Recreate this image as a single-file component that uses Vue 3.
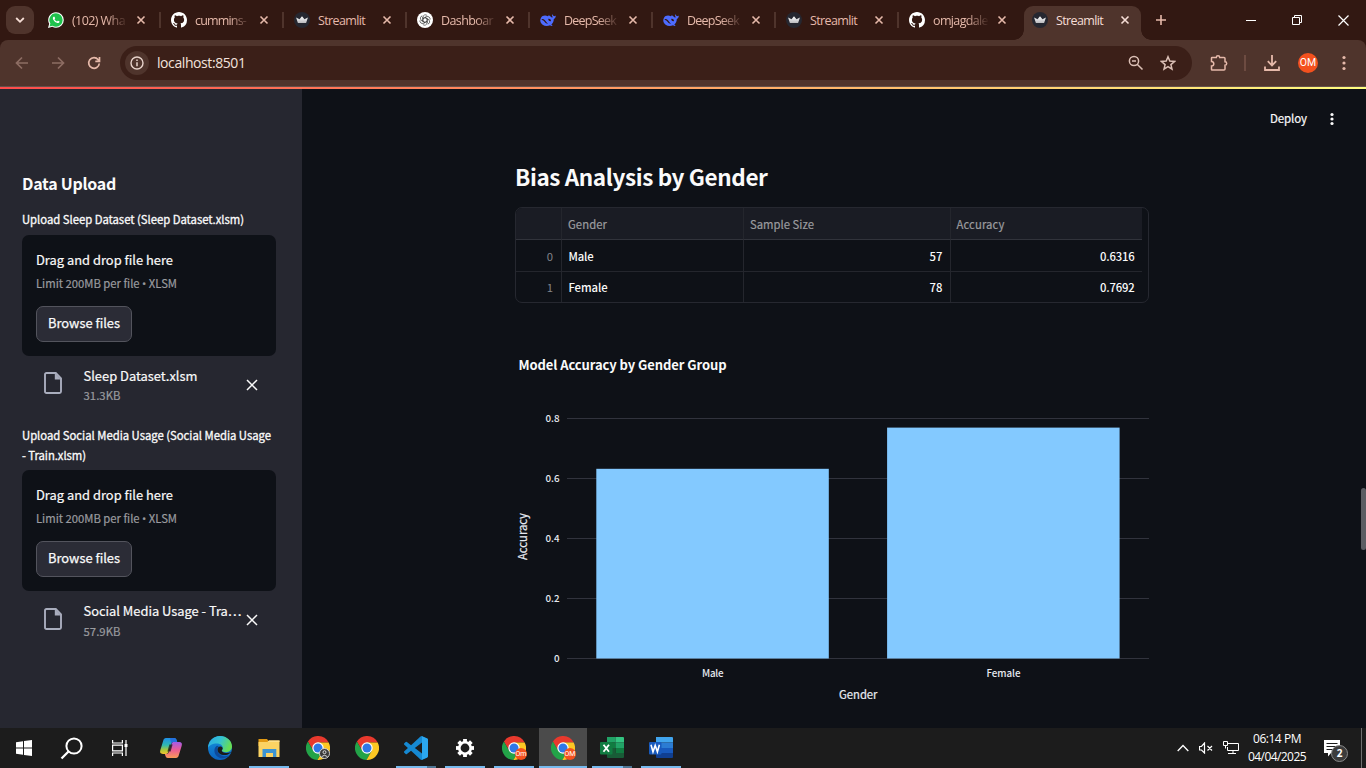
<script setup>
const tabs = [
  { icon: 'whatsapp', title: '(102) Wha', w: 53 },
  { icon: 'github', title: 'cummins-', w: 51 },
  { icon: 'crown', title: 'Streamlit', w: 47 },
  { icon: 'openai', title: 'Dashboar', w: 52 },
  { icon: 'whale', title: 'DeepSeek', w: 52 },
  { icon: 'whale', title: 'DeepSeek', w: 52 },
  { icon: 'crown', title: 'Streamlit', w: 47 },
  { icon: 'github', title: 'omjagdale', w: 55 },
  { icon: 'crown', title: 'Streamlit', w: 47, active: true },
]

const uploads = [
  {
    label: [{ text: 'Upload Sleep Dataset (Sleep Dataset.xlsm)', w: 222 }],
    file: 'Sleep Dataset.xlsm', fw: 114, size: '31.3KB',
  },
  {
    label: [
      { text: 'Upload Social Media Usage (Social Media Usage', w: 249 },
      { text: '- Train.xlsm)', w: 64 },
    ],
    file: 'Social Media Usage - Tra…', fw: 158, size: '57.9KB',
  },
]

const rows = [
  { i: 0, gender: 'Male', gw: 25, size: '57', acc: '0.6316' },
  { i: 1, gender: 'Female', gw: 39, size: '78', acc: '0.7692' },
]

const ticks = [
  { v: '0.8', y: 418.5 },
  { v: '0.6', y: 478.5 },
  { v: '0.4', y: 538.5 },
  { v: '0.2', y: 598.5 },
  { v: '0', y: 658.5 },
]

const apps = [
  { icon: 'copilot' },
  { icon: 'edge' },
  { icon: 'folder', open: true },
  { icon: 'chrome', badge: 'user' },
  { icon: 'chrome' },
  { icon: 'vscode', open: true, multi: true },
  { icon: 'gear', open: true },
  { icon: 'chrome', badge: 'Om', open: true },
  { icon: 'chrome', badge: 'OM', open: true, active: true },
  { icon: 'excel', open: true, multi: true },
  { icon: 'word', open: true },
]

// Tracks a label so that it takes exactly the given number of pixels.
const vFit = {
  mounted(el, { value }) {
    if (!value) return
    el.style.letterSpacing = '0px'
    const range = document.createRange()
    range.selectNodeContents(el)
    const natural = range.getBoundingClientRect().width
    el.style.letterSpacing = (value - natural) / el.textContent.length + 'px'
  },
}
</script>

<template>
  <div class="screen">
    <svg class="defs" width="0" height="0">
      <defs>
        <linearGradient id="cpA" x1="0" y1="0" x2="0" y2="1">
          <stop offset="0" stop-color="#1f8fe8" /><stop offset=".45" stop-color="#2fb9b0" />
          <stop offset=".75" stop-color="#a9c83a" /><stop offset="1" stop-color="#f3c32e" />
        </linearGradient>
        <linearGradient id="cpB" x1="0" y1="0" x2="0" y2="1">
          <stop offset="0" stop-color="#a55be8" /><stop offset=".5" stop-color="#ee5d92" />
          <stop offset="1" stop-color="#fb9a56" />
        </linearGradient>
        <linearGradient id="edA" x1="0" y1="0" x2="1" y2=".35">
          <stop offset="0" stop-color="#2aa8e8" /><stop offset=".55" stop-color="#35c3d0" />
          <stop offset="1" stop-color="#66dd55" />
        </linearGradient>
        <linearGradient id="edB" x1="0" y1="0" x2="0" y2="1">
          <stop offset="0" stop-color="#1593dc" /><stop offset="1" stop-color="#0b62c0" />
        </linearGradient>
        <linearGradient id="crownFill" x1="0" y1="0" x2="0" y2="1">
          <stop offset="0" stop-color="#ffffff" /><stop offset="1" stop-color="#b9b9bd" />
        </linearGradient>
        <symbol id="whatsapp" viewBox="0 0 24 24">
          <path fill="#fff" d="M12 .3A11.7 11.7 0 0 1 12 23.700c-2 0-4-.5-5.600-1.400L0 24l1.800-6.200A11.700 11.700 0 0 1 12 .3" />
          <path fill="#1fc24c" d="M12 2a10 10 0 0 1 0 20c-1.970 0-3.800-.57-5.350-1.550L2.300 21.700l1.250-4.350A10 10 0 0 1 12 2" />
          <path fill="#fff" d="M16.750 13.960c.25.13.41.2.46.3.06.11.04.61-.21 1.180-.2.56-1.240 1.100-1.700 1.120-.46.02-.47.36-2.960-.73-2.490-1.090-3.990-3.750-4.110-3.920-.12-.17-.96-1.380-.92-2.610.05-1.220.69-1.800.95-2.040.24-.26.51-.29.68-.26h.47c.15 0 .36-.06.55.45l.69 1.870c.06.13.1.28.01.44l-.27.41-.39.42c-.12.12-.26.25-.12.5.12.26.62 1.090 1.320 1.780.91.88 1.710 1.170 1.950 1.300.24.14.39.12.54-.04l.81-.94c.19-.25.35-.19.58-.11z" />
        </symbol>
        <symbol id="github" viewBox="0 0 16 16">
          <path fill="#fff" d="M8 0C3.580 0 0 3.580 0 8c0 3.540 2.290 6.530 5.470 7.590.4.07.55-.17.55-.38 0-.19-.01-.82-.01-1.490-2.010.37-2.530-.49-2.690-.94-.09-.23-.48-.94-.82-1.130-.28-.15-.68-.52-.01-.53.63-.01 1.080.58 1.230.82.72 1.210 1.870.87 2.330.66.07-.52.28-.87.51-1.070-1.780-.2-3.640-.89-3.640-3.950 0-.87.31-1.590.82-2.150-.08-.2-.36-1.020.08-2.120 0 0 .67-.21 2.200.82.64-.18 1.320-.27 2-.27.68 0 1.360.09 2 .27 1.530-1.040 2.200-.82 2.200-.82.44 1.100.16 1.920.08 2.120.51.56.82 1.270.82 2.150 0 3.070-1.870 3.750-3.650 3.950.29.25.54.73.54 1.480 0 1.070-.01 1.930-.01 2.200 0 .21.15.46.55.38A8.013 8.013 0 0 0 16 8c0-4.420-3.580-8-8-8z" />
        </symbol>
        <symbol id="crown" viewBox="0 0 16 16">
          <circle cx="8" cy="8" r="8" fill="#262730" />
          <path fill="url(#crownFill)" d="M2.100 5.500 5.500 7.200 8 4.300l2.500 2.900 3.400-1.700-1.700 5.200c-.1.300-.3.400-.6.400H4.400c-.3 0-.5-.1-.6-.4z" />
        </symbol>
        <symbol id="openai" viewBox="0 0 16 16">
          <circle cx="8" cy="8" r="8" fill="#fff" />
          <g fill="none" stroke="#333" stroke-width=".65" stroke-linejoin="round">
            <path v-for="a in 6" :key="a" :transform="`rotate(${a * 60} 8 8)`" d="M6 9.100V5.100a2.400 2.400 0 0 1 4.200-1.500M6.100 6.500 9.400 4.600" />
          </g>
        </symbol>
        <symbol id="whale" viewBox="0 0 16 16">
          <path fill="#4d6bfe" d="M15.700 3.600c-.5.500-1 .6-1.600.5-.6-.1-1-.5-1.500-1.100-.2-.3-.3-.7-.4-1-.4.600-.3 1.300 0 1.900.3.700.5 1.300.1 1.900-.9-.3-1.600-1-2.300-1.700-.5-.6-1.100-1-1.700-.9.500.700.1 1-.4 1C4.900 3 2.200 3.600.9 5.900c-1.400 2.500-.4 5.300 1.700 6.900 2.100 1.500 5 1.600 7.500.5.500.5 1.400.7 2.200.5.300-.1.200-.4 0-.5-.4-.3-.8-.6-.9-.9 1.700-1.500 2.400-3.400 2.400-5.500 1.400-.3 2.100-1.800 1.900-3.300M8 12.100c-1.900-.4-3-1.600-4.100-3C3.200 8.300 2.400 7.900 1.500 8c.1-.800 1-1.100 2-.7 1.900.7 2.600 2.800 4.500 4.800m1.500-3.200C8.700 8.500 8.100 7.700 8.300 6.800c.9-.3 1.900.1 2.400 1 .4.700.3 1.400-.2 1.500z" />
        </symbol>
        <symbol id="close" viewBox="0 0 10 10">
          <path d="M1.500 1.500l7 7M8.500 1.500l-7 7" fill="none" stroke="currentColor" stroke-width="1.600" />
        </symbol>
        <symbol id="chrome" viewBox="0 0 24 24">
          <path fill="#e8392d" d="M12 12V6.500h10.670A12 12 0 0 0 1.900 5.510L7.240 14.750z" />
          <path fill="#23a348" d="M12 12 7.240 14.750 1.900 5.510A12 12 0 0 0 11.430 23.990l5.330-9.240z" />
          <path fill="#fcc723" d="M12 12l4.760 2.750-5.330 9.240A12 12 0 0 0 22.670 6.500H12z" />
          <circle cx="12" cy="12" r="5.700" fill="#fff" /><circle cx="12" cy="12" r="4.500" fill="#2f77e8" />
        </symbol>
        <symbol id="copilot" viewBox="0 0 24 24">
          <path fill="url(#cpA)" d="M7 2h8.200c1.200 0 1.900.7 2.300 1.900l.7 2.100h-3.600c-1.300 0-2 .8-2.400 2L9.400 16c-.5 1.300-1.200 1.900-2.300 1.900H3.800c-2.300 0-3.200-1.300-2.500-3.600L4.200 4.700C4.700 3 5.500 2 7 2z" />
          <path fill="#2370dd" d="M11 2h4.200c1.200 0 1.900.7 2.300 1.900l.7 2.100h-3.600c-1.300 0-2 .8-2.400 2z" />
          <path fill="url(#cpB)" d="M17 22H8.800c-1.200 0-1.900-.7-2.300-1.900L5.800 18h1.700c1.300 0 2-.8 2.400-2l2.700-8c.5-1.300 1.200-1.900 2.300-1.900h5.300c2.300 0 3.200 1.300 2.500 3.600l-2.900 9.600C19.300 21 18.500 22 17 22z" />
          <path fill="#1e1e1e" d="M10.400 8.500h3.200l-2 7H8.400z" opacity=".8" />
        </symbol>
        <symbol id="edge" viewBox="0 0 24 24">
          <circle cx="12" cy="12" r="12" fill="url(#edB)" />
          <path fill="url(#edA)" d="M0 12C.3 5.200 5.300 0 12 0c7 0 12 5 12 10.600 0 3.400-2.600 5.600-5.900 5.600-2.300 0-4.300-.6-4.300-1.700 0-.7.9-1 .9-2.600 0-2.200-2-4.400-6-4.400C4.500 7.500 1 9.600 0 12z" />
          <path fill="#0d4a9c" d="M8.800 9.700c-3 2.100-3.400 7 .2 10.500 2.600 2.500 8 3.300 12.200-.6C15 22 9.200 18 9.200 13.400c0-1.500.6-2.700 1.700-3.500z" />
          <path fill="#1b1b1b" d="M9.500 13.400c0 3.900 4.500 6.800 9.800 5.300 2-.7 3.300-1.800 3.700-2.600-1.400.7-3 1-4.900.9-2.400-.1-4.300-.9-4.300-2.500 0-.7.9-1 .9-2.600-1.700-2.600-5.200-1.500-5.200 1.500z" />
        </symbol>
        <symbol id="folder" viewBox="0 0 24 24">
          <path fill="#e29a13" d="M1.500 3H10l2 2.500V10H1.500z" /><path fill="#fbd363" d="M1.500 6h9l1.500-1.500h10.500V21h-21z" />
          <path fill="#ffe08a" d="M1.500 6h9l1.500-1.500h10.500V6z" />
          <path fill="#3b94d3" d="M5.500 13h13.800v8H16v-4H9v4H5.500z" />
        </symbol>
        <symbol id="vscode" viewBox="0 0 24 24">
          <path fill="#1689d2" d="M23.150 2.587L18.210.21a1.494 1.494 0 0 0-1.705.29l-9.460 8.630-4.120-3.128a.999.999 0 0 0-1.276.057L.327 7.261A1 1 0 0 0 .326 8.740L3.899 12 .326 15.260a1 1 0 0 0 .001 1.479L1.650 17.940a.999.999 0 0 0 1.276.057l4.120-3.128 9.460 8.630a1.492 1.492 0 0 0 1.704.290l4.942-2.377A1.500 1.500 0 0 0 24 20.060V3.939a1.500 1.500 0 0 0-.85-1.352zm-5.146 14.861L10.826 12l7.178-5.448v10.896z" />
          <path fill="#2ba7ef" d="M18 .2l5.150 2.387a1.500 1.500 0 0 1 .85 1.352V20.060a1.500 1.500 0 0 1-.85 1.352L18 23.800z" />
        </symbol>
        <symbol id="gear" viewBox="0 0 24 24">
          <g fill="#fff"><rect v-for="a in 8" :key="a" x="10.100" y="3" width="3.800" height="5" :transform="`rotate(${a * 45} 12 12)`" /></g>
          <circle cx="12" cy="12" r="5.700" fill="#1c1c1c" stroke="#fff" stroke-width="2.600" />
        </symbol>
        <symbol id="excel" viewBox="0 0 24 24">
          <path fill="#21a366" d="M7 1h8.500v5.500H7z" /><path fill="#33c481" d="M15.500 1H23a1 1 0 0 1 1 1v4.500h-8.500z" />
          <path fill="#107c41" d="M7 6.500h8.500V12H7zM15.500 12H24v5h-8.500z" /><path fill="#21a366" d="M15.500 6.500H24V12h-8.500z" />
          <path fill="#185c37" d="M7 12h8.500v5H24v4a1 1 0 0 1-1 1H8a1 1 0 0 1-1-1z" />
          <rect y="6" width="12.500" height="12.500" rx="1" fill="#107c41" />
          <path d="M3.500 8.800l5.500 7M9 8.800l-5.500 7" stroke="#fff" stroke-width="1.800" />
        </symbol>
        <symbol id="word" viewBox="0 0 24 24">
          <path fill="#41a5ee" d="M7 1h16a1 1 0 0 1 1 1v4.500H7z" /><path fill="#2b7cd3" d="M7 6.500h17V12H7z" />
          <path fill="#185abd" d="M7 12h17v5H7z" /><path fill="#103f91" d="M7 17h17v4a1 1 0 0 1-1 1H8a1 1 0 0 1-1-1z" />
          <rect y="6" width="12.500" height="12.500" rx="1" fill="#185abd" />
          <path d="M2 8.800l2 7 2.200-6.400 2.200 6.400 2-7" fill="none" stroke="#fff" stroke-width="1.600" />
        </symbol>
      </defs>
    </svg>

    <header class="tabstrip">
      <div class="tabsearch">
        <svg width="12" height="12" viewBox="0 0 12 12"><path d="M2.200 4 6 7.800 9.800 4" fill="none" stroke="#f6ded6" stroke-width="1.800" /></svg>
      </div>
      <div v-for="(t, i) in tabs" :key="i" class="tab" :class="{ active: t.active, bare: i === 7, whole: t.icon === 'crown' }">
        <svg class="fav" width="16" height="16"><use :href="'#' + t.icon" /></svg>
        <span class="title"><span v-fit="t.w">{{ t.title }}</span></span>
        <svg class="x" width="10" height="10"><use href="#close" /></svg>
      </div>
      <svg class="plus" width="12" height="12" viewBox="0 0 12 12"><path d="M6 1v10M1 6h10" stroke="#e6b9aa" stroke-width="1.600" /></svg>
      <div class="winbtns">
        <svg width="11" height="11" viewBox="0 0 11 11"><path d="M0 5.500h10" stroke="#fff" /></svg>
        <svg width="11" height="11" viewBox="0 0 11 11"><path d="M.5 2.500h7v7h-7zM2.500 2.500v-2h7v7h-2" fill="none" stroke="#fff" /></svg>
        <svg width="11" height="11" viewBox="0 0 11 11"><path d="M.5.5l10 10M10.500.5l-10 10" fill="none" stroke="#fff" stroke-width="1.200" /></svg>
      </div>
    </header>

    <div class="frame">
      <div class="toolbar">
        <div class="nav">
          <svg width="14" height="14" viewBox="0 0 14 14" class="dim"><path d="M13 7H1.500M7 1.500 1.500 7 7 12.500" /></svg>
          <svg width="14" height="14" viewBox="0 0 14 14" class="dim"><path d="M1 7h11.500M7 1.500 12.500 7 7 12.500" /></svg>
          <svg width="14" height="14" viewBox="0 0 14 14"><path d="M12.300 7.500A5.300 5.300 0 1 1 11.200 3.700L12.500 5M12.500 1v4.300H8.300" /></svg>
        </div>
        <div class="omnibox">
          <div class="info">
            <svg width="14" height="14" viewBox="0 0 14 14"><circle cx="7" cy="7" r="6" fill="none" stroke="#e8d3cb" stroke-width="1.400" /><path d="M7 6.200v4M7 3.500v1.500" stroke="#e8d3cb" stroke-width="1.500" /></svg>
          </div>
          <span class="url"><span v-fit="88.5">localhost:8501</span></span>
          <svg class="zoom" width="16" height="16" viewBox="0 0 16 16"><path d="M9.200 9.200 14.500 14.500M4 6h4" /><circle cx="6" cy="6" r="4.600" /></svg>
          <svg class="star" width="16" height="16" viewBox="0 0 16 16"><path d="M8 1.800l1.800 4.300 4.700.4-3.600 3.100 1.100 4.600L8 11.700l-4 2.500 1.100-4.600L1.500 6.500l4.700-.4z" /></svg>
        </div>
        <svg class="puzzle" width="18" height="18" viewBox="0 0 18 18"><path d="M2 3.500h4.300a1.700 1.700 0 0 1 3.400 0h4.300q1 0 1 1v3.300a1.700 1.700 0 0 1 0 3.400v3.800q0 1-1 1H2q-.5 0-.5-.5V12a2.300 2.300 0 0 0 0-4.600V4q0-.5.500-.5z" fill="none" stroke="#e6b9aa" stroke-width="1.500" /></svg>
        <i class="sep"></i>
        <svg class="dl" width="18" height="18" viewBox="0 0 18 18"><path d="M9 1v10M4.800 7.200 9 11.400l4.200-4.200M2 12.500V16h14v-3.500" fill="none" stroke="#e6b9aa" stroke-width="1.800" /></svg>
        <div class="avatar">OM</div>
        <svg class="kebab" width="4" height="16" viewBox="0 0 4 16" fill="#e6b9aa"><circle cx="2" cy="2.500" r="1.600" /><circle cx="2" cy="8" r="1.600" /><circle cx="2" cy="13.500" r="1.600" /></svg>
      </div>
    </div>
    <div class="rainbow"></div>

    <div class="page">
      <aside class="sidebar">
        <h2><span v-fit="94">Data Upload</span></h2>
        <section v-for="u in uploads" :key="u.file">
          <div class="label"><div v-for="l in u.label" :key="l.text"><span v-fit="l.w">{{ l.text }}</span></div></div>
          <div class="drop">
            <div class="drag"><span v-fit="137">Drag and drop file here</span></div>
            <div class="limit"><span v-fit="141">Limit 200MB per file <span class="dot">•</span> XLSM</span></div>
            <button><span v-fit="72">Browse files</span></button>
          </div>
          <div class="file">
            <svg width="18" height="22" viewBox="0 0 18 22"><path d="M2.500 1h9.300L17 6.300v13.200q0 1.500-1.500 1.500h-13Q1 21 1 19.500v-17Q1 1 2.500 1z" fill="none" stroke="#a9adbd" stroke-width="1.900" /><path d="M10.800 1v6.500H17z" fill="#a9adbd" /></svg>
            <div class="meta">
              <div class="fname"><span v-fit="u.fw">{{ u.file }}</span></div>
              <div class="fsize"><span v-fit="37">{{ u.size }}</span></div>
            </div>
            <svg class="rm" width="12" height="12" viewBox="0 0 12 12"><path d="M1 1l10 10M11 1 1 11" stroke="#fafafa" stroke-width="1.500" /></svg>
          </div>
        </section>
      </aside>

      <main>
        <div class="apphead">
          <span class="deploy"><span v-fit="37">Deploy</span></span>
          <svg width="4" height="14" viewBox="0 0 4 14" fill="#fafafa"><circle cx="2" cy="2.500" r="1.600" /><circle cx="2" cy="7" r="1.600" /><circle cx="2" cy="11.500" r="1.600" /></svg>
        </div>
        <div class="content">
          <h3><span v-fit="252.500">Bias Analysis by Gender</span></h3>
          <div class="table">
            <div class="cell hd"></div>
            <div class="cell hd"><span v-fit="39">Gender</span></div>
            <div class="cell hd"><span v-fit="64">Sample Size</span></div>
            <div class="cell hd last"><span v-fit="48">Accuracy</span></div>
            <template v-for="r in rows" :key="r.i">
              <div class="cell idx">{{ r.i }}</div>
              <div class="cell name"><span v-fit="r.gw">{{ r.gender }}</span></div>
              <div class="cell num"><span v-fit="13">{{ r.size }}</span></div>
              <div class="cell num last"><span v-fit="34.5">{{ r.acc }}</span></div>
            </template>
          </div>
          <svg class="chart" width="634" height="425" viewBox="515 303 634 425">
            <text class="ctitle" x="518.500" y="370" textLength="208">Model Accuracy by Gender Group</text>
            <g v-for="t in ticks" :key="t.v">
              <path :d="`M567 ${t.y}H1149`" stroke="#31333d" />
              <text class="tick" x="559.500" :y="t.y + 3.5" text-anchor="end">{{ t.v }}</text>
            </g>
            <rect x="596.300" y="468.800" width="232.500" height="189.700" fill="#83c9ff" />
            <rect x="887.100" y="427.600" width="232.500" height="230.900" fill="#83c9ff" />
            <text class="tick" x="702" y="677" textLength="21.500">Male</text>
            <text class="tick" x="986.500" y="677" textLength="34">Female</text>
            <text class="axis" x="839" y="699" textLength="38.500">Gender</text>
            <text class="axis" transform="translate(527 560) rotate(-90)" textLength="47">Accuracy</text>
          </svg>
        </div>
      </main>
      <i class="thumb"></i>
    </div>

    <footer class="taskbar">
      <div class="sys"><svg width="16" height="16" viewBox="0 0 16 16" fill="#fff"><path d="M0 2.300 7 1.200v6.300H0zM8 1l8-1v7.500H8zM0 8.500h7v6.300l-7-1.100zM8 8.500h8V16l-8-1z" /></svg></div>
      <div class="sys"><svg width="24" height="24" viewBox="0 0 24 24" fill="none" stroke="#fff"><circle cx="14" cy="10" r="7.600" stroke-width="2" /><path d="M8.500 15.500 1.500 22.500" stroke-width="2.300" /></svg></div>
      <div class="sys"><svg width="16" height="16" viewBox="0 0 16 16" fill="none" stroke="#fff" stroke-width="1.200"><path d="M.6 0v3h9.800V0M.6 5.200h9.800v5.600H.6zM.6 16v-3h9.800v3M14 0v16" /><path d="M14 4v3" stroke-width="3" /></svg></div>
      <div class="apps">
        <div v-for="(a, i) in apps" :key="i" class="app" :class="{ open: a.open, active: a.active, multi: a.multi }">
          <svg width="24" height="24"><use :href="'#' + a.icon" /></svg>
          <span v-if="a.badge === 'user'" class="ubadge">
            <svg width="11" height="11" viewBox="0 0 11 11"><circle cx="5.500" cy="5.500" r="5" fill="#3a3a3a" stroke="#ddd" stroke-width=".9" /><circle cx="5.500" cy="4.200" r="1.500" fill="none" stroke="#ddd" /><path d="M2.600 8.600q2.900-2.600 5.800 0" fill="none" stroke="#ddd" /></svg>
          </span>
          <span v-else-if="a.badge" class="obadge">{{ a.badge }}</span>
        </div>
      </div>
      <div class="tray">
        <svg class="chev" width="12" height="8" viewBox="0 0 12 8"><path d="M.7 7 6 1.500 11.300 7" fill="none" stroke="#fff" stroke-width="1.300" /></svg>
        <svg class="spk" width="15" height="12" viewBox="0 0 15 12" fill="none" stroke="#fff"><path d="M.5 4.500v3.500h2l3 3v-10l-3 3.500zM8.500 4l4.500 4.500M13 4 8.500 8.500" stroke-width="1.200" /></svg>
        <svg class="net" width="16" height="14" viewBox="0 0 16 14" fill="none" stroke="#fff"><path d="M5 2.500h10.500v7H4.500V6M.5.500h4v4h-4zM2.500 4.500v3M10 9.500v3M5 12.500h8" /></svg>
        <div class="clock"><span v-fit="48">06:14 PM</span><span v-fit="58">04/04/2025</span></div>
        <div class="notif">
          <svg width="17" height="17" viewBox="0 0 17 17"><path d="M0 0h16v13H7l-3 3.500V13H0z" fill="#fff" /><path d="M2.500 3.500h11M2.500 6.500h11M2.500 9.500h7" stroke="#1c1c1c" /></svg>
          <b>2</b>
        </div>
        <i class="peek"></i>
      </div>
    </footer>
  </div>
</template>

<style>
html, body { background: #0e1117; overflow: hidden; }
</style>

<style scoped>
.screen { width: 1366px; height: 768px; display: flex; flex-direction: column; overflow: hidden; background: #0e1117; color: #fafafa; font-family: "Noto Sans CJK SC", sans-serif; }
.defs { position: absolute; }
svg { display: block; flex: none; }
span, text { white-space: pre; }

.tabstrip { height: 40px; flex: none; background: #321812; display: flex; align-items: center; padding-left: 6px; font: 12.500px "Open Sans", sans-serif; color: #e6b9aa; }
.tabsearch { width: 28px; height: 28px; border-radius: 9px; background: #4f342c; display: flex; align-items: center; justify-content: center; margin-right: 6px; }
.tab { position: relative; width: 123px; height: 34px; margin-top: 6px; display: flex; align-items: center; padding: 0 0 6px 8px; box-sizing: border-box; }
.tab::after { content: ""; position: absolute; right: 2px; top: 6px; width: 2px; height: 16px; background: #4f342c; }
.tab.active::after, .tab.bare::after { display: none; }
.tab.active { width: 117px; background: #4f342c; border-radius: 9px 9px 0 0; color: #f6ded6; }
.tab.active::before { content: ""; position: absolute; left: -10px; right: -10px; bottom: 0; height: 10px; background: radial-gradient(circle at 0 0, transparent 9.500px, #4f342c 10px) left / 10px 10px no-repeat, radial-gradient(circle at 100% 0, transparent 9.500px, #4f342c 10px) right / 10px 10px no-repeat; }
.title { width: 56px; margin-left: 8px; padding-top: 1px; line-height: 20px; -webkit-mask-image: linear-gradient(90deg, #000 34px, transparent 56px); mask-image: linear-gradient(90deg, #000 34px, transparent 56px); }
.tab.whole .title { -webkit-mask-image: none; mask-image: none; }
.x { margin-left: 8px; }
.plus { margin-left: 14px; }
.winbtns { margin-left: auto; display: flex; gap: 35px; padding-right: 17px; }

.frame { height: 47px; flex: none; background: #321812; }
.toolbar { height: 47px; box-sizing: border-box; background: #4f342c; border-bottom: 1px solid #63504a; border-radius: 8px 8px 0 0; display: flex; align-items: center; }
.nav { display: flex; gap: 22px; padding-left: 15px; width: 105px; box-sizing: border-box; fill: none; stroke: #e6b9aa; stroke-width: 1.700; }
.dim { stroke: #8d6d63; }
.omnibox { margin-left: 15px; width: 1072px; height: 34px; border-radius: 17px; background: #3b1f18; display: flex; align-items: center; padding-left: 5px; box-sizing: border-box; fill: none; stroke: #dcc0b6; stroke-width: 1.500; }
.info { width: 24px; height: 24px; border-radius: 50%; background: #4f342c; display: flex; align-items: center; justify-content: center; }
.url { font: 14px/20px "Open Sans", sans-serif; color: #f3e2dc; margin-left: 8px; }
.zoom { margin-left: auto; }
.star { margin-left: 16px; margin-right: 16px; }
.puzzle { margin-left: 18px; }
.sep { width: 2px; height: 16px; background: #6d4b41; margin-left: 16px; }
.dl { margin-left: 17px; }
.avatar { width: 20px; height: 20px; border-radius: 50%; background: #f4511e; margin-left: 17px; font: 10.500px/20px Roboto, sans-serif; text-align: center; color: #fff; }
.kebab { margin-left: 24px; }
.rainbow { height: 2px; flex: none; background: linear-gradient(90deg, #ff4b4b, #fffd80); }

.page { height: 639px; display: flex; position: relative; }
.sidebar { width: 302px; box-sizing: border-box; background: #262730; padding: 82px 26px 0 22px; }
h2 { margin: 0 0 14px; font-size: 16px; line-height: 24px; font-weight: 700; }
.label { font-size: 11.300px; line-height: 20px; -webkit-text-stroke: .3px; margin-bottom: 6px; }
section + section .label { margin-bottom: 5px; }
.drop { height: 121px; box-sizing: border-box; border-radius: 7px; background: #0e1117; padding: 14px 14px 0; }
.drag { font-size: 12.900px; line-height: 22px; -webkit-text-stroke: .2px; }
.limit { font-size: 11.300px; line-height: 20px; height: 20px; margin-top: 2px; color: #9a9b9f; -webkit-text-stroke: .2px; }
.dot { font-family: "Open Sans", sans-serif; line-height: 1; }
button { display: flex; align-items: center; justify-content: center; width: 96px; height: 36px; margin-top: 13px; padding: 0 0 3px; box-sizing: border-box; background: #2b2c36; border: 1px solid #53545d; border-radius: 7px; color: #fafafa; font: 400 12.900px "Noto Sans CJK SC", sans-serif; -webkit-text-stroke: .25px; }
.file { height: 69px; display: flex; align-items: flex-start; padding-left: 22px; }
.file > svg { margin-top: 16px; }
section + section .file > svg:first-child { margin-top: 17px; }
.meta { margin-left: 21.500px; width: 162.500px; padding-top: 10px; }
.fname { font-size: 12.900px; line-height: 20px; -webkit-text-stroke: .2px; }
.fsize { font-size: 11.300px; line-height: 19px; color: #9a9b9f; -webkit-text-stroke: .2px; }
section + section .fsize { line-height: 20px; }
.file > .rm { margin: 23px 0 0; }

main { flex: 1; }
.apphead { height: 60px; display: flex; justify-content: flex-end; align-items: center; padding-right: 32px; box-sizing: border-box; }
.deploy { font-size: 11.500px; line-height: 20px; margin: -2px 23px 0 0; -webkit-text-stroke: .2px; }
.content { margin-left: 213px; width: 634px; padding-top: 12px; }
h3 { margin: 0 0 16px; font-size: 22.500px; line-height: 30px; font-weight: 700; }
.table { display: grid; grid-template-columns: 46px 182px 206.500px 191.500px; grid-template-rows: 32px 32px 30px; width: 634px; height: 96px; box-sizing: border-box; border: 1px solid #262830; border-radius: 7px; overflow: hidden; }
.cell { box-sizing: border-box; border-right: 1px solid #24262d; border-bottom: 1px solid #24262d; padding: 0 7px 0 6px; font-size: 11.300px; line-height: 32px; height: 32px; font-weight: 500; }
.cell:nth-last-child(-n+4) { border-bottom: 0; height: 30px; line-height: 31px; }
.hd { background: #1a1c24; color: #9a9b9f; border-bottom-color: #31333b; font-weight: 400; -webkit-text-stroke: .2px; }
.last { border-right: 0; padding-right: 7.500px; }
.name { padding-left: 6.500px; }
.num { text-align: right; }
.idx { text-align: right; color: #83858a; font-weight: 400; padding-right: 8px; }
.chart { font-family: "Noto Sans CJK SC", sans-serif; fill: #fafafa; }
.ctitle { font-size: 13px; font-weight: 700; }
.tick { font-size: 9.800px; fill: #e6eaf1; font-weight: 500; }
.axis { font-size: 11.300px; fill: #e6eaf1; stroke: #e6eaf1; stroke-width: .2px; }
.thumb { position: absolute; right: 0; top: 399px; width: 5px; height: 62px; border-radius: 3px; background: #5b5d63; }

.taskbar { height: 40px; flex: none; background: #1c1c1c; display: flex; font-family: "Open Sans", sans-serif; }
.sys { width: 48px; display: flex; align-items: center; justify-content: center; }
.apps { display: flex; gap: 1px; margin-left: 3px; }
.app { position: relative; width: 48px; display: flex; align-items: center; justify-content: center; }
.app.open::after { content: ""; position: absolute; left: 4px; right: 4px; bottom: 0; height: 2px; background: #76b9ed; }
.app.multi::after { background: linear-gradient(90deg, #76b9ed 31px, #4f7694 31px); }
.app.active { background: #4b4b4b; }
.app.active::after { left: 0; right: 0; }
.obadge { position: absolute; left: 25px; top: 20px; width: 12px; height: 12px; border-radius: 50%; background: #f4511e; font: 7px/12px Roboto, sans-serif; text-align: center; color: #fff; }
.ubadge { position: absolute; left: 25px; top: 20px; }
.tray { margin-left: auto; display: flex; align-items: center; }
.spk { margin-left: 10px; }
.net { margin-left: 9px; }
.clock { width: 60px; margin-left: 8px; display: flex; flex-direction: column; align-items: center; font-size: 12px; line-height: 18px; color: #fff; }
.notif { position: relative; margin-left: 17px; width: 37px; }
.notif b { position: absolute; left: 7px; top: 5px; width: 15px; height: 15px; border-radius: 50%; border: 1px solid #8a8a8a; background: #3c3c3c; font: 700 10px/15px "Open Sans", sans-serif; text-align: center; color: #fff; }
.peek { width: 1px; height: 40px; background: #6f6f6f; margin-right: 4px; }
</style>
